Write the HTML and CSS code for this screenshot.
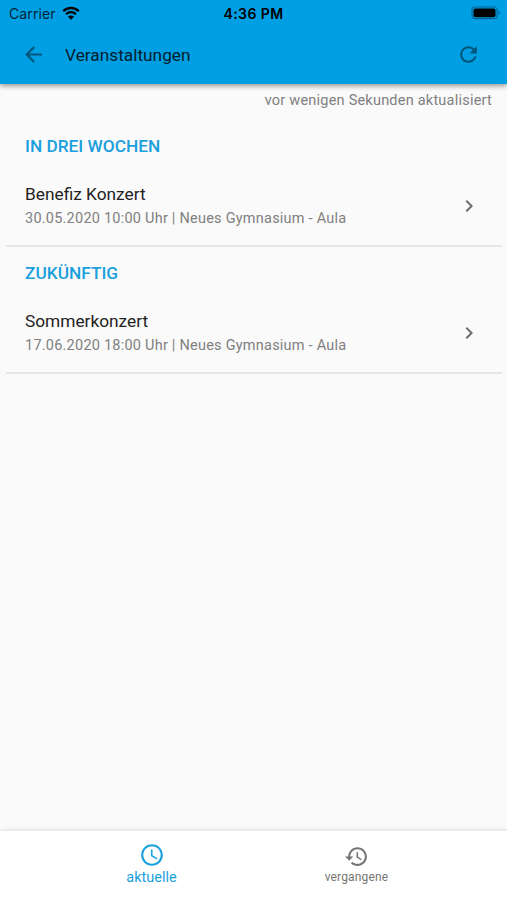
FILE: index.html
```
<!DOCTYPE html>
<html lang="de">
<head>
    <meta charset="utf-8">
    <title>Veranstaltungen</title>
    <link rel="stylesheet" href="styles.css">
</head>
<body>
<header class="header">
    <div class="statusbar">
        <div class="carrier">
            <span>Carrier</span>
            <svg class="wifi" viewBox="0 0 18 14">
                <path d="M1.2 5.2C5.5.9 12.5.9 16.8 5.2M4.1 8.2C6.8 5.5 11.2 5.5 13.9 8.2" fill="none" stroke="#000" stroke-width="2.3"/>
                <path d="M9 13.7L5.9 10.6C7.6 9 10.4 9 12.1 10.6z"/>
            </svg>
        </div>
        <span class="time">4:36 PM</span>
        <svg class="battery" viewBox="0 0 30 14">
            <rect x="1" y="1" width="25" height="11.6" rx="3.4" fill="none" stroke="#00659a" stroke-width="1.2"/>
            <rect x="2.5" y="2.5" width="22" height="8.8" rx="2"/>
            <path d="M27.500 4.600c1.900.7 1.900 3.800 0 4.500z" fill="#00659a"/>
        </svg>
    </div>
    <div class="toolbar">
        <svg class="icon back" viewBox="0 0 24 24"><path d="M20 11H7.830l5.590-5.590L12 4l-8 8 8 8 1.410-1.410L7.830 13H20v-2z"/></svg>
        <h1>Veranstaltungen</h1>
        <svg class="icon refresh" viewBox="0 0 24 24"><path d="M17.650 6.350C16.200 4.900 14.210 4 12 4c-4.420 0-7.990 3.580-7.990 8s3.570 8 7.990 8c3.730 0 6.840-2.550 7.730-6h-2.080c-.82 2.330-3.040 4-5.650 4-3.310 0-6-2.690-6-6s2.690-6 6-6c1.660 0 3.140.69 4.220 1.780L13 11h7V4l-2.350 2.350z"/></svg>
    </div>
</header>

<main>
    <p class="updated">vor wenigen Sekunden aktualisiert</p>

    <section>
        <h2>IN DREI WOCHEN</h2>
        <div class="event">
            <div>
                <div class="name">Benefiz Konzert</div>
                <div class="info">30.05.2020 10:00 Uhr | Neues Gymnasium - Aula</div>
            </div>
            <svg class="chevron" viewBox="0 0 24 24"><path d="M8.590 16.590L13.170 12 8.590 7.410 10 6l6 6-6 6z"/></svg>
        </div>
    </section>

    <section>
        <h2>ZUKÜNFTIG</h2>
        <div class="event">
            <div>
                <div class="name">Sommerkonzert</div>
                <div class="info">17.06.2020 18:00 Uhr | Neues Gymnasium - Aula</div>
            </div>
            <svg class="chevron" viewBox="0 0 24 24"><path d="M8.590 16.590L13.170 12 8.590 7.410 10 6l6 6-6 6z"/></svg>
        </div>
    </section>
</main>

<nav class="tabs">
    <div class="tab active">
        <svg viewBox="0 0 24 24"><path d="M11.990 2C6.470 2 2 6.480 2 12s4.470 10 9.990 10C17.520 22 22 17.520 22 12S17.520 2 11.990 2zM12 20c-4.420 0-8-3.580-8-8s3.580-8 8-8 8 3.580 8 8-3.580 8-8 8zm.5-13H11v6l5.250 3.150.75-1.230-4.500-2.670z"/></svg>
        <span>aktuelle</span>
    </div>
    <div class="tab">
        <svg viewBox="0 0 24 24"><path d="M13 3c-4.970 0-9 4.030-9 9H1l3.890 3.890.07.14L9 12H6c0-3.870 3.130-7 7-7s7 3.130 7 7-3.130 7-7 7c-1.930 0-3.680-.79-4.940-2.060l-1.420 1.420C8.270 19.990 10.510 21 13 21c4.970 0 9-4.030 9-9s-4.030-9-9-9zm-1 5v5l4.280 2.540.72-1.210-3.500-2.080V8H12z"/></svg>
        <span>vergangene</span>
    </div>
</nav>
</body>
</html>
```
FILE: styles.css
```
* {
    box-sizing: border-box;
}
body {
    margin: 0;
    height: 100vh;
    display: flex;
    flex-direction: column;
    background: #fafafa;
    font-family: Roboto, "Liberation Sans", sans-serif;
}
svg { display: block; flex: none; }
h1, h2, p { margin: 0; }

.header {
    height: 84px;
    background: #009fe3;
    box-shadow: 0 2px 5px rgba(0, 0, 0, 0.4);
}
.statusbar {
    height: 27px;
    padding: 0 6px 0 9px;
    display: grid;
    grid-template-columns: 1fr auto 1fr;
    align-items: center;
    font: 14px/27px Inter, sans-serif;
    color: #002436;
}
.carrier { display: flex; align-items: center; gap: 6px; letter-spacing: 0.1px; }
.wifi { width: 18px; height: 14px; margin-top: -2px; }
.time { margin-right: 3px; font-weight: 600; letter-spacing: 0.4px; color: #000; }
.battery { width: 30px; height: 14px; margin-top: -1px; justify-self: end; }
.toolbar {
    height: 55px;
    padding: 0 26px 0 21px;
    display: flex;
    align-items: center;
}
.toolbar h1 {
    flex: 1;
    margin-left: 19px;
    font-size: 17.3px;
    font-weight: 400;
    line-height: 24px;
    color: #00202e;
}
.icon { width: 25px; height: 25px; fill: #00567a; }

main { flex: 1; }
.updated {
    padding: 8px 15px 0;
    font-size: 14.5px;
    line-height: 18px;
    letter-spacing: 0.22px;
    text-align: right;
    color: #808080;
}
section {
    height: 127px;
    margin: 0 5px 0 6px;
    padding: 14px 19px 0;
    border-bottom: 2px solid #e6e6e6;
}
.updated + section { height: 137px; padding-top: 24px; }
h2 {
    font-size: 17.3px;
    font-weight: 500;
    line-height: 24px;
    color: #1a9fdd;
}
.event {
    display: flex;
    align-items: center;
    justify-content: space-between;
    margin-top: 24px;
}
.name {
    font-size: 17.3px;
    line-height: 24px;
    color: #222;
}
.info {
    margin-top: 1px;
    font-size: 14.5px;
    line-height: 24px;
    letter-spacing: 0.23px;
    color: #808080;
}
.chevron { width: 24px; height: 24px; margin: 0 2px 2px 0; fill: #6c6c6c; }

.tabs {
    height: 69px;
    padding-left: 1px;
    display: flex;
    justify-content: center;
    background: #fff;
    box-shadow: 0 -1px 4px rgba(0, 0, 0, 0.12);
}
.tab {
    width: 205px;
    padding-top: 13px;
    display: flex;
    flex-direction: column;
    align-items: center;
    font-size: 12px;
    line-height: 16px;
    letter-spacing: 0.15px;
    color: #757575;
    fill: #757575;
}
.tab svg { width: 25px; height: 25px; }
.active { padding-top: 11px; font-size: 14.5px; line-height: 20px; letter-spacing: 0; color: #1a9fdd; fill: #1a9fdd; }
.active svg { width: 26px; height: 26px; }
```
